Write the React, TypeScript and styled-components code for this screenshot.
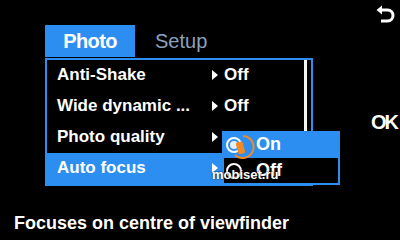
import React from 'react'
import styled, { createGlobalStyle } from 'styled-components'

const BLUE = '#2d8ef2'
const FONT = '"Liberation Sans", Arial, sans-serif'

const GlobalStyle = createGlobalStyle`
  html, body {
    margin: 0;
    padding: 0;
    background: #000;
  }
  body {
    font-family: ${FONT};
  }
`

const Screen = styled.div({
  width: '400px',
  height: '240px',
  background: '#000',
  color: '#fff',
  display: 'flex',
  flexDirection: 'column',
  overflow: 'hidden',
  fontFamily: FONT,
})

const Top = styled.div({
  display: 'flex',
  flexDirection: 'row',
  height: '212px',
})

const MenuArea = styled.div({
  display: 'flex',
  flexDirection: 'column',
  padding: '25px 0 0 45px',
  width: '268px',
})

const Tabs = styled.div({
  display: 'flex',
  flexDirection: 'row',
  alignItems: 'center',
  height: '32px',
})

const Tab = styled.div<{ active?: boolean }>(props => ({
  width: props.active ? '90px' : 'auto',
  height: '32px',
  display: 'flex',
  alignItems: 'center',
  justifyContent: 'center',
  marginLeft: props.active ? 0 : '20px',
  background: props.active ? BLUE : 'transparent',
  color: props.active ? '#fff' : '#8aa2bc',
  fontSize: '20px',
  fontWeight: props.active ? 700 : 400,
  letterSpacing: props.active ? '-0.6px' : 0,
}))

const Menu = styled.div({
  position: 'relative',
  marginTop: '1px',
  width: '268px',
  boxSizing: 'border-box',
  border: `2px solid ${BLUE}`,
  display: 'flex',
  flexDirection: 'row',
})

const List = styled.div({
  flex: 1,
  display: 'flex',
  flexDirection: 'column',
})

const Row = styled.div<{ selected?: boolean }>(props => ({
  height: '31px',
  display: 'flex',
  alignItems: 'center',
  paddingLeft: '10px',
  paddingBottom: '2px',
  boxSizing: 'border-box',
  background: props.selected ? BLUE : 'transparent',
  fontSize: '17px',
  fontWeight: 700,
  color: '#fff',
  marginRight: props.selected ? '-11px' : 0,
}))

const Label = styled.div({
  width: '155px',
  whiteSpace: 'nowrap',
})

const Arrow = styled.div({
  width: 0,
  height: 0,
  borderTop: '5px solid transparent',
  borderBottom: '5px solid transparent',
  borderLeft: '6px solid #fff',
  marginRight: '6px',
})

const Value = styled.div({
  whiteSpace: 'nowrap',
})

const Track = styled.div({
  width: '9px',
  paddingLeft: '2px',
  boxSizing: 'border-box',
})

const Thumb = styled.div({
  width: '3px',
  height: '72px',
  background: '#f4f4f4',
})

const Popup = styled.div({
  position: 'absolute',
  left: '175px',
  top: '71px',
  width: '118px',
  display: 'flex',
  flexDirection: 'column',
})

const Option = styled.div<{ selected?: boolean }>(props => ({
  height: '27px',
  boxSizing: 'border-box',
  display: 'flex',
  alignItems: 'center',
  gap: '14px',
  paddingLeft: '4px',
  background: props.selected ? BLUE : '#000',
  border: props.selected ? 'none' : `2px solid ${BLUE}`,
  borderTop: 'none',
  fontSize: '18px',
  fontWeight: 700,
  color: '#fff',
}))

const Radio = styled.div<{ checked?: boolean }>(props => ({
  width: '16px',
  height: '16px',
  boxSizing: 'border-box',
  borderRadius: '50%',
  border: '2px solid #fff',
  marginLeft: props.checked ? '0' : '-2px',
  display: 'flex',
  alignItems: 'center',
  justifyContent: 'center',
  '&::after': {
    content: '""',
    display: props.checked ? 'block' : 'none',
    width: '8px',
    height: '8px',
    borderRadius: '50%',
    background: '#e8eef6',
  },
}))

const Watermark = styled.div({
  position: 'absolute',
  left: '165px',
  top: '82px',
  width: '80px',
  height: '50px',
  pointerEvents: 'none',
})

const WatermarkText = styled.div({
  position: 'absolute',
  left: 0,
  top: '25px',
  fontSize: '13px',
  fontWeight: 700,
  color: '#fff',
  textShadow: '0 0 2px #000',
  whiteSpace: 'nowrap',
})

const Side = styled.div({
  flex: 1,
  display: 'flex',
  flexDirection: 'column',
  alignItems: 'flex-end',
  padding: '5px 5px 0 0',
})

const Ok = styled.div({
  marginTop: '88px',
  marginRight: '-2px',
  fontSize: '20px',
  fontWeight: 700,
  letterSpacing: '-2px',
  color: '#fff',
})

const Footer = styled.div({
  paddingLeft: '14px',
  fontSize: '18px',
  lineHeight: '22px',
  fontWeight: 700,
  color: '#fff',
  whiteSpace: 'nowrap',
})

function ReturnIcon() {
  return (
    <svg width="19" height="18" viewBox="0 0 19 18">
      <path d="M5 5 H11.5 A5.5 5.5 0 0 1 11.5 16 H5" fill="none" stroke="#fff" strokeWidth="3" />
      <path d="M0.5 5 L6 0.5 L6 9.5 Z" fill="#fff" />
    </svg>
  )
}

function WatermarkIcon() {
  return (
    <svg width="40" height="32" viewBox="0 0 40 32" style={{ position: 'absolute', left: '11px', top: '-10px' }}>
      <path d="M20 4 A11 11 0 1 1 12 23" fill="none" stroke="#f08a24" strokeWidth="2" />
      <rect x="14" y="10" width="7" height="12" rx="1.5" fill="#f08a24" transform="rotate(-15 17 16)" />
    </svg>
  )
}

const items = [
  { label: 'Anti-Shake', value: 'Off' },
  { label: 'Wide dynamic ...', value: 'Off' },
  { label: 'Photo quality', value: '' },
  { label: 'Auto focus', value: '', selected: true },
]

export default function App() {
  return (
    <>
      <GlobalStyle />
      <Screen>
        <Top>
          <MenuArea>
            <Tabs>
              <Tab active>Photo</Tab>
              <Tab>Setup</Tab>
            </Tabs>
            <Menu>
              <List>
                {items.map(item => (
                  <Row key={item.label} selected={item.selected}>
                    <Label>{item.label}</Label>
                    <Arrow />
                    {item.value && <Value>{item.value}</Value>}
                  </Row>
                ))}
              </List>
              <Track>
                <Thumb />
              </Track>
              <Popup>
                <Option selected>
                  <Radio checked />
                  On
                </Option>
                <Option>
                  <Radio />
                  Off
                </Option>
              </Popup>
              <Watermark>
                <WatermarkIcon />
                <WatermarkText>mobiset.ru</WatermarkText>
              </Watermark>
            </Menu>
          </MenuArea>
          <Side>
            <ReturnIcon />
            <Ok>OK</Ok>
          </Side>
        </Top>
        <Footer>Focuses on centre of viewfinder</Footer>
      </Screen>
    </>
  )
}
